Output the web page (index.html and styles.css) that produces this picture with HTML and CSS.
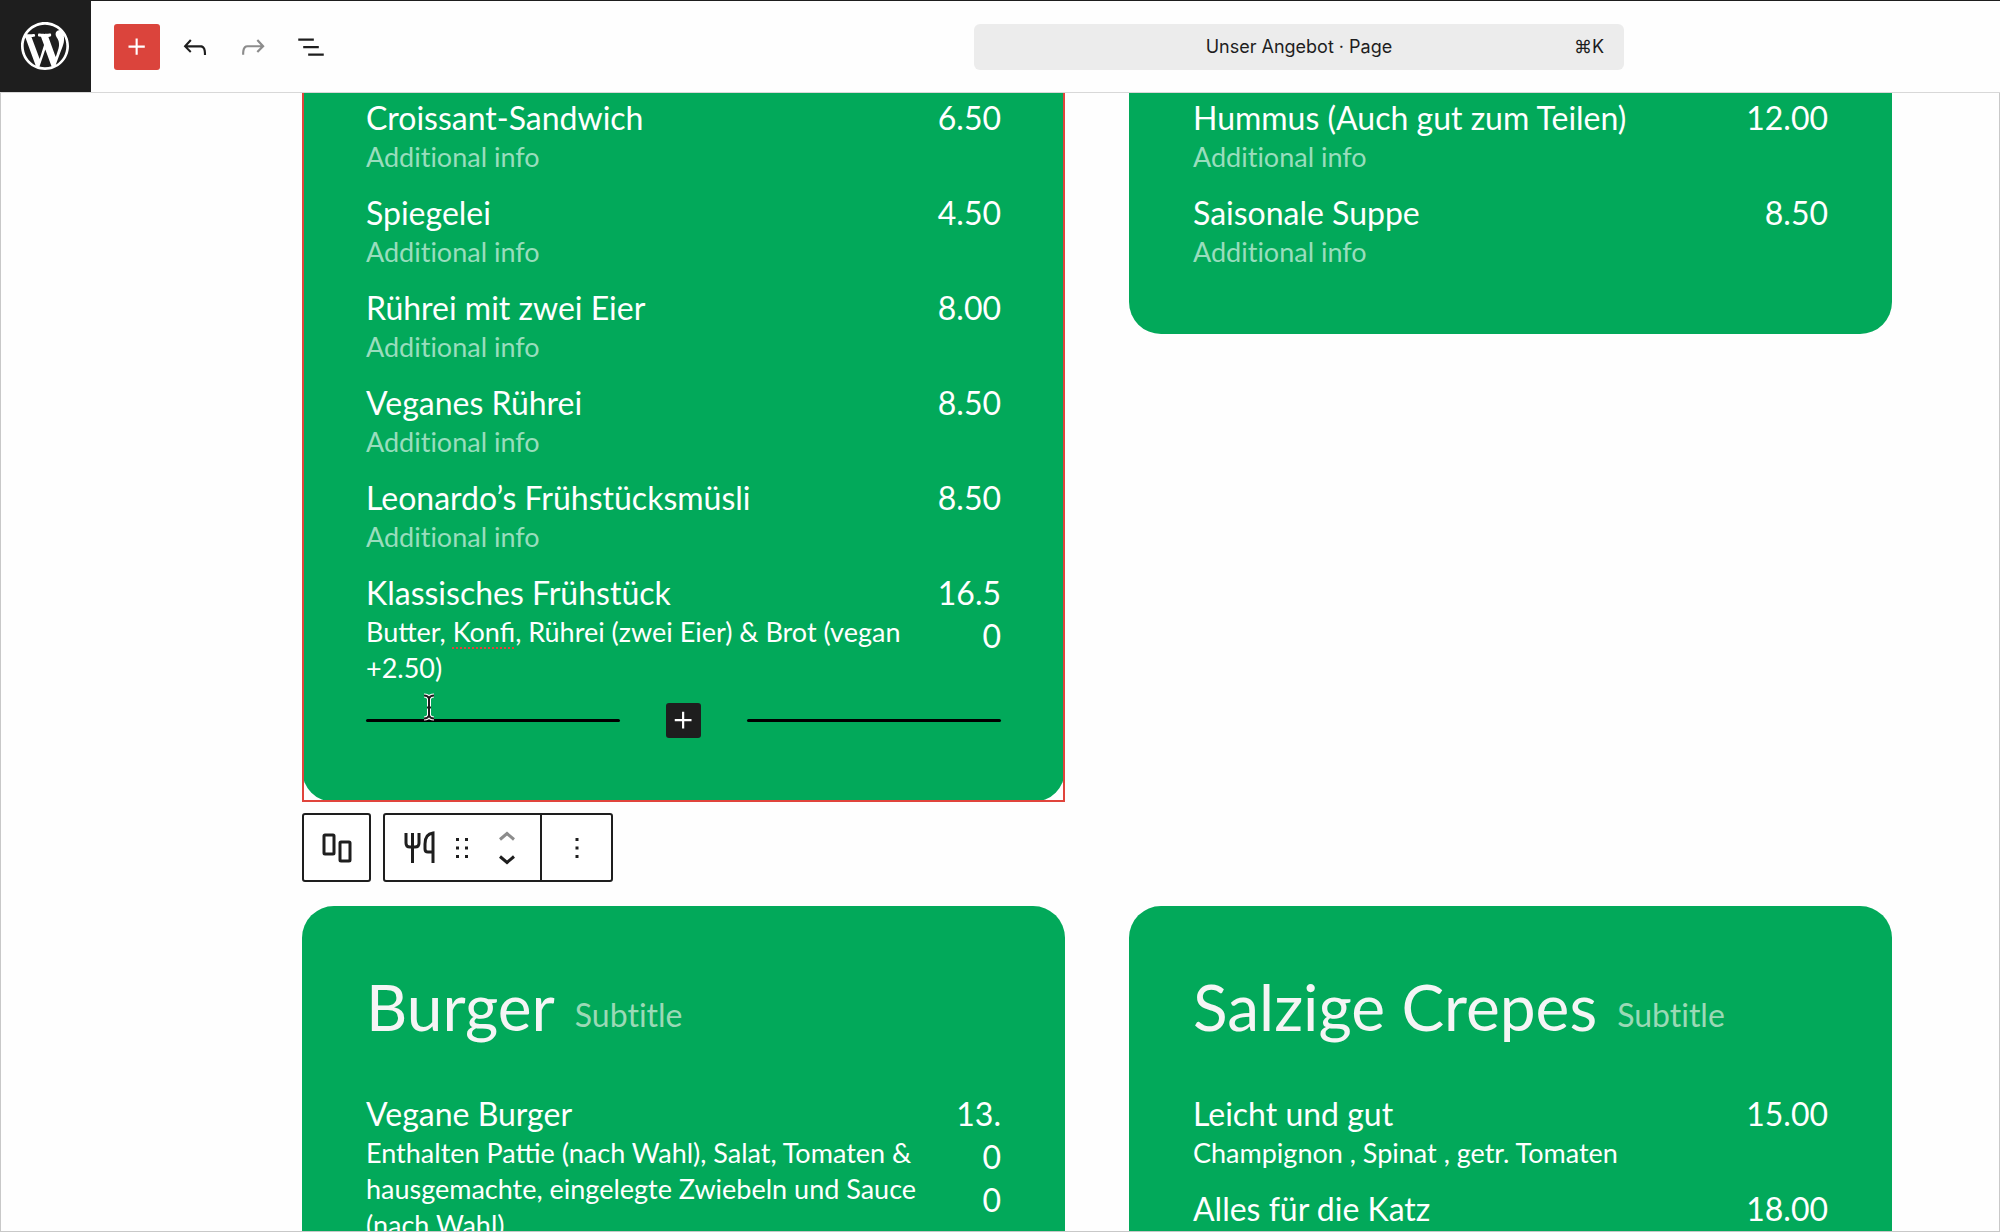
FILE: index.html
```html
<!DOCTYPE html>
<html lang="de">
<head>
    <meta charset="UTF-8">
    <meta name="viewport" content="width=device-width, initial-scale=1.0">
    <title>Unser Angebot</title>
    <link rel="stylesheet" href="styles.css">
</head>
<body>
    <header class="editor-header">
        <a class="site-logo" href="#" aria-label="WordPress">
            <svg viewBox="0 0 20 20"><path d="M20 10c0-5.51-4.49-10-10-10C4.48 0 0 4.49 0 10c0 5.52 4.48 10 10 10 5.51 0 10-4.48 10-10zM7.78 15.37L4.37 6.22c.55-.02 1.17-.08 1.17-.08.5-.06.44-1.13-.06-1.11 0 0-1.45.11-2.37.11-.18 0-.37 0-.58-.01C4.12 2.69 6.87 1.11 10 1.11c2.33 0 4.45.87 6.05 2.34-.68-.11-1.65.39-1.65 1.58 0 .74.45 1.36.9 2.1.35.61.55 1.36.55 2.46 0 1.49-1.4 5-1.4 5l-3.03-8.37c.54-.02.82-.17.82-.17.5-.05.44-1.25-.06-1.22 0 0-1.44.12-2.38.12-.87 0-2.33-.12-2.33-.12-.5-.03-.56 1.2-.06 1.22l.92.08 1.26 3.41zM17.41 10c.24-.64.74-1.87.43-4.25.7 1.29 1.05 2.71 1.05 4.25 0 3.29-1.73 6.24-4.4 7.78.97-2.59 1.94-5.2 2.92-7.78zM6.1 18.09C3.12 16.65 1.11 13.53 1.11 10c0-1.3.23-2.48.72-3.59C3.25 10.3 4.67 14.2 6.1 18.09zm4.03-6.63l2.58 6.98c-.86.29-1.76.45-2.71.45-.79 0-1.57-.11-2.29-.33.81-2.38 1.62-4.74 2.42-7.1z"/></svg>
        </a>
        <div class="tools">
            <button class="tool tool-add" aria-label="Add block">
                <svg viewBox="0 0 24 24"><path d="M11 12.5V17.5H12.5V12.5H17.5V11H12.5V6H11V11H6V12.5H11Z"/></svg>
            </button>
            <button class="tool" aria-label="Undo">
                <svg viewBox="0 0 24 24"><path d="M18.3 11.7c-.6-.6-1.4-.9-2.3-.9H6.7l2.9-3.3-1.1-1-4.5 5L8.5 16l1-1-2.7-2.7H16c.5 0 .9.2 1.3.5 1 1 1 3.4 1 4.5v.3h1.5v-.2c0-1.5 0-4.3-1.5-5.7z"/></svg>
            </button>
            <button class="tool" aria-label="Redo" disabled>
                <svg viewBox="0 0 24 24"><path d="M15.6 6.5l-1.1 1 2.9 3.3H8c-.9 0-1.7.3-2.3.9-1.4 1.5-1.4 4.2-1.4 5.6v.2h1.5v-.3c0-1.1 0-3.5 1-4.5.3-.3.7-.5 1.3-.5h9.2L14.5 15l1.1 1.1 4.6-4.6-4.6-5z"/></svg>
            </button>
            <button class="tool" aria-label="Document overview">
                <svg viewBox="0 0 24 24"><path d="M3 6h11v1.5H3V6Zm3.5 5.3h11v1.5h-11v-1.5ZM21 16.6H10v1.5h11v-1.5Z"/></svg>
            </button>
        </div>
        <button class="command-bar">
            <span class="command-title">Unser Angebot · Page</span>
            <span class="command-key">⌘K</span>
        </button>
    </header>

    <main class="canvas">
        <div class="menu-grid">
            <div class="selected-block">
                <section class="card card-cut">
                    <ul class="items">
                        <li class="item">
                            <div class="item-text"><h3>Croissant-Sandwich</h3><p class="placeholder">Additional info</p></div>
                            <span class="price">6.50</span>
                        </li>
                        <li class="item">
                            <div class="item-text"><h3>Spiegelei</h3><p class="placeholder">Additional info</p></div>
                            <span class="price">4.50</span>
                        </li>
                        <li class="item">
                            <div class="item-text"><h3>Rührei mit zwei Eier</h3><p class="placeholder">Additional info</p></div>
                            <span class="price">8.00</span>
                        </li>
                        <li class="item">
                            <div class="item-text"><h3>Veganes Rührei</h3><p class="placeholder">Additional info</p></div>
                            <span class="price">8.50</span>
                        </li>
                        <li class="item">
                            <div class="item-text"><h3>Leonardo’s Frühstücksmüsli</h3><p class="placeholder">Additional info</p></div>
                            <span class="price">8.50</span>
                        </li>
                        <li class="item">
                            <div class="item-text"><h3>Klassisches Frühstück</h3><p>Butter, <span class="misspelled">Konfi</span>, Rührei (zwei Eier) &amp; Brot (vegan +2.50)</p></div>
                            <span class="price">16.5<br>0</span>
                        </li>
                    </ul>
                    <div class="appender">
                        <span class="appender-line"></span>
                        <button class="appender-button" aria-label="Add menu item">
                            <svg viewBox="0 0 24 24"><path d="M11 12.5V17.5H12.5V12.5H17.5V11H12.5V6H11V11H6V12.5H11Z"/></svg>
                        </button>
                        <span class="appender-line"></span>
                    </div>
                </section>

                <svg class="text-cursor" viewBox="0 0 14 28">
                    <path class="cursor-halo" d="M2 2.500Q6 2.500 7 5.500Q8 2.500 12 2.500M7 5.500V22.500M2 25.500Q6 25.500 7 22.500Q8 25.500 12 25.500M5 14.500H9"/>
                    <path class="cursor-shape" d="M2 2.500Q6 2.500 7 5.500Q8 2.500 12 2.500M7 5.500V22.500M2 25.500Q6 25.500 7 22.500Q8 25.500 12 25.500M5 14.500H9"/>
                </svg>

                <div class="block-toolbar">
                    <div class="toolbar-group">
                        <button class="toolbar-button parent-button" aria-label="Select parent block">
                            <svg width="30" height="30" viewBox="0 0 30 30" class="stroke-icon"><rect x="2" y="2" width="10" height="19" rx="1"/><rect x="18" y="9" width="10" height="19" rx="1"/></svg>
                        </button>
                    </div>
                    <div class="toolbar-group">
                        <button class="toolbar-button type-button" aria-label="Menu section">
                            <svg width="32" height="34" viewBox="0 0 32 34" class="stroke-icon"><path d="M3 2V12Q3 16 7 16H12Q16 16 16 12V2M9.500 2V32M30 32V2Q22 3 22 13V18Q22 21 25 21H30"/></svg>
                        </button>
                        <button class="toolbar-button drag-button" aria-label="Drag">
                            <svg width="14" height="22" viewBox="0 0 14 22"><path d="M1 1h3v3H1zM10 1h3v3h-3zM1 9.500h3v3H1zM10 9.500h3v3h-3zM1 18h3v3H1zM10 18h3v3h-3z"/></svg>
                        </button>
                        <div class="movers">
                            <button class="mover" aria-label="Move up" disabled>
                                <svg width="18" height="10" viewBox="0 0 18 10" class="stroke-icon"><path d="M2 8.500L9 2.500L16 8.500"/></svg>
                            </button>
                            <button class="mover" aria-label="Move down">
                                <svg width="18" height="10" viewBox="0 0 18 10" class="stroke-icon"><path d="M2 1.500L9 7.500L16 1.500"/></svg>
                            </button>
                        </div>
                        <button class="toolbar-button more-button" aria-label="Options">
                            <svg width="4" height="22" viewBox="0 0 4 22"><path d="M.5 1h3v3h-3zM.5 9.500h3v3h-3zM.5 18h3v3h-3z"/></svg>
                        </button>
                    </div>
                </div>
            </div>

            <section class="card card-cut">
                <ul class="items">
                    <li class="item">
                        <div class="item-text"><h3>Hummus (Auch gut zum Teilen)</h3><p class="placeholder">Additional info</p></div>
                        <span class="price">12.00</span>
                    </li>
                    <li class="item">
                        <div class="item-text"><h3>Saisonale Suppe</h3><p class="placeholder">Additional info</p></div>
                        <span class="price">8.50</span>
                    </li>
                </ul>
            </section>

            <section class="card">
                <div class="card-head">
                    <h2>Burger</h2>
                    <span class="subtitle">Subtitle</span>
                </div>
                <ul class="items">
                    <li class="item">
                        <div class="item-text"><h3>Vegane Burger</h3><p>Enthalten Pattie (nach Wahl), Salat, Tomaten &amp; hausgemachte, eingelegte Zwiebeln und Sauce (nach Wahl)</p></div>
                        <span class="price">13.<br>0<br>0</span>
                    </li>
                </ul>
            </section>

            <section class="card">
                <div class="card-head">
                    <h2>Salzige Crepes</h2>
                    <span class="subtitle">Subtitle</span>
                </div>
                <ul class="items">
                    <li class="item">
                        <div class="item-text"><h3>Leicht und gut</h3><p>Champignon , Spinat , getr. Tomaten</p></div>
                        <span class="price">15.00</span>
                    </li>
                    <li class="item">
                        <div class="item-text"><h3>Alles für die Katz</h3></div>
                        <span class="price">18.00</span>
                    </li>
                </ul>
            </section>
        </div>
    </main>
</body>
</html>
```

FILE: styles.css
```css
* {
    box-sizing: border-box;
}
body {
    margin: 0;
    height: 100vh;
    display: flex;
    flex-direction: column;
    overflow: hidden;
    background-color: #fefefe;
    color: #1e1e1e;
    font-family: Inter, sans-serif;
}
h2, h3, p, ul {
    margin: 0;
    padding: 0;
    font-weight: 400;
}
button {
    padding: 0;
    border: none;
    background: none;
    color: inherit;
    font-family: inherit;
    cursor: pointer;
}
svg {
    display: block;
    fill: currentColor;
}
.stroke-icon {
    fill: none;
    stroke: currentColor;
    stroke-width: 3;
}

/* header */
.editor-header {
    flex: none;
    display: flex;
    align-items: center;
    height: 93px;
    border-top: 1px solid #1e1e1e;
    border-bottom: 1px solid #d8d8d8;
}
.site-logo {
    display: flex;
    align-items: center;
    justify-content: center;
    width: 91px;
    height: 91px;
    padding: 0 2px 2px 0;
    background-color: #1e1e1e;
    color: #fff;
}
.site-logo svg {
    width: 48px;
    height: 48px;
}
.tools {
    display: flex;
    gap: 12px;
    margin-left: 23px;
}
.tool {
    display: flex;
    align-items: center;
    justify-content: center;
    width: 46px;
    height: 46px;
    border-radius: 3px;
}
.tool svg {
    width: 34px;
    height: 34px;
}
.tool:disabled {
    color: #8c8c8c;
}
.tool-add {
    background-color: #db443c;
    color: #fff;
}
.command-bar {
    display: flex;
    align-items: center;
    width: 650px;
    height: 46px;
    margin: 0 376px 0 auto;
    padding: 0 20px;
    border-radius: 6px;
    background-color: #ececec;
    font-size: 18px;
}
.command-title {
    flex: 1;
    padding-left: 30px;
}

/* canvas */
.canvas {
    flex: 1;
    min-height: 0;
    overflow: hidden;
    padding: 0 107px 0 301px;
    border: 1px solid #c8c8c8;
    border-top: none;
}
.menu-grid {
    display: grid;
    grid-template-columns: 1fr 1fr;
    column-gap: 64px;
    row-gap: 104px;
    align-items: start;
}
.card {
    padding: 64px;
    border-radius: 32px;
    background-color: #02a95a;
    color: #fff;
    font-family: Lato, sans-serif;
}
.card-cut {
    padding-top: 3px;
    border-top-left-radius: 0;
    border-top-right-radius: 0;
}
.card-head {
    display: flex;
    gap: 20px;
    margin-bottom: 40px;
    color: #f5f5f5;
}
.card-head h2 {
    font-size: 64px;
    line-height: 74px;
}
.subtitle {
    padding-top: 8px;
    font-size: 32px;
    line-height: 74px;
    color: #9bd9b6;
}
.subtitle, .placeholder {
    font-variant-ligatures: none;
}
.items {
    display: flex;
    flex-direction: column;
    gap: 16px;
    list-style: none;
}
.item {
    display: flex;
    gap: 24px;
}
.item-text {
    flex: 1;
}
.item h3, .price {
    font-size: 32px;
    line-height: 43px;
}
.price {
    text-align: right;
}
.item p {
    font-size: 27px;
    line-height: 36px;
}
.item .placeholder {
    color: #99ddbd;
}
.misspelled {
    text-decoration: underline dotted #e0443c 2px;
    text-underline-offset: 5px;
}
.appender {
    display: flex;
    align-items: center;
    justify-content: space-between;
    margin-top: 17px;
}
.appender-line {
    width: 40%;
    height: 3px;
    border-radius: 2px;
    background-color: #000;
}
.appender-button {
    display: flex;
    align-items: center;
    justify-content: center;
    width: 35px;
    height: 35px;
    border-radius: 3px;
    background-color: #1e1e1e;
    color: #fff;
}
.appender-button svg {
    width: 35px;
    height: 35px;
}

/* selection */
.selected-block {
    position: relative;
}
.selected-block::after {
    content: "";
    position: absolute;
    inset: 0;
    border: 2px solid #e0443c;
    border-top: none;
    pointer-events: none;
}
.text-cursor {
    position: absolute;
    left: 120px;
    top: 600px;
    width: 14px;
    height: 28px;
    fill: none;
}
.cursor-halo {
    stroke: #fff;
    stroke-width: 4;
}
.cursor-shape {
    stroke: #1e1e1e;
    stroke-width: 2;
}
.block-toolbar {
    position: absolute;
    top: calc(100% + 11px);
    left: 0;
    display: flex;
    gap: 12px;
}
.toolbar-group {
    display: flex;
    height: 69px;
    border: 2px solid #1e1e1e;
    border-radius: 3px;
    background-color: #fff;
}
.toolbar-button, .mover {
    display: flex;
    align-items: center;
    justify-content: center;
}
.parent-button {
    width: 65px;
}
.type-button {
    width: 66px;
    padding-left: 2px;
}
.drag-button {
    width: 22px;
}
.movers {
    display: flex;
    flex-direction: column;
    justify-content: center;
    align-items: center;
    gap: 14px;
    width: 67px;
}
.mover:disabled {
    color: #8c8c8c;
}
.more-button {
    width: 71px;
    border-left: 2px solid #1e1e1e;
}
```
